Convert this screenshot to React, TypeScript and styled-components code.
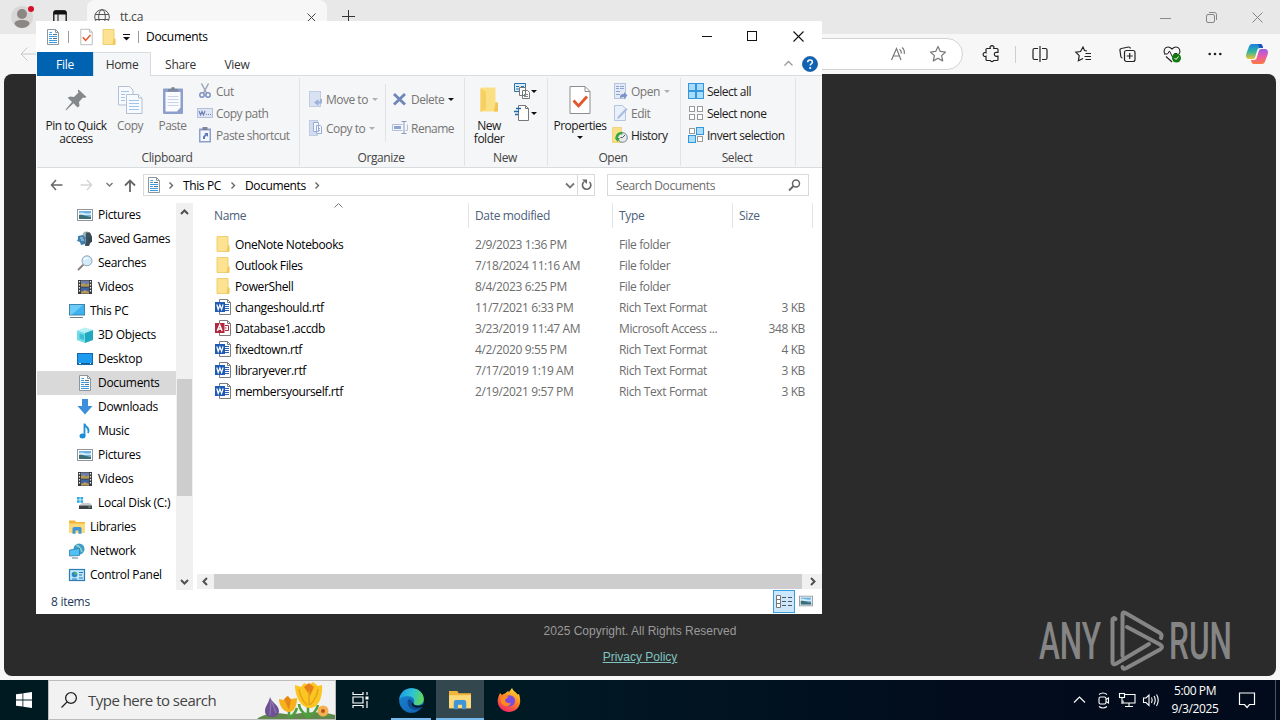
import React from 'react';
import styled, { createGlobalStyle } from 'styled-components';

const GlobalStyle = createGlobalStyle`
    * { box-sizing: border-box; }
    html, body { margin: 0; padding: 0; overflow: hidden; }
    body { font-family: "Open Sans", "Noto Sans", sans-serif; font-size: 12px; letter-spacing: -0.38px; color: #000; }
`;

const Desktop = styled.div`
    position: relative;
    display: flex;
    flex-direction: column;
    width: 1280px;
    height: 720px;
    overflow: hidden;
    background: #f7f7f7;
`;

const Svg = styled.svg<{ $ml?: number; $mr?: number }>`
    display: block;
    flex: none;
    overflow: visible;
    margin-left: ${p => p.$ml || 0}px;
    margin-right: ${p => p.$mr || 0}px;
`;

const Gap = styled.div<{ $w: number }>`
    flex: none;
    width: ${p => p.$w}px;
`;

/* ---------- browser ---------- */

const Browser = styled.div`
    display: flex;
    flex-direction: column;
    height: 680px;
    background: #f7f7f7;
`;

const TabStrip = styled.div`
    display: flex;
    align-items: flex-start;
    height: 34px;
    background: #e8e8e8;
    padding: 0 17px 0 11px;
`;

const BrowserTab = styled.div`
    display: flex;
    align-items: center;
    width: 240px;
    height: 34px;
    margin-left: 20px;
    padding: 0 11px 0 7px;
    background: #f7f7f7;
    border-radius: 8px 8px 0 0;
    color: #444;
    font-size: 12px;
    gap: 10px;
`;

const TabName = styled.span`
    flex: 1;
    padding-bottom: 1px;
    letter-spacing: -0.2px;
`;

const StripButtons = styled.div`
    display: flex;
    align-items: center;
    gap: 35px;
    height: 34px;
    margin-left: auto;
`;

const ToolBar = styled.div`
    display: flex;
    align-items: center;
    height: 40px;
    padding: 0 11px 0 20px;
`;

const UrlBox = styled.div`
    display: flex;
    flex: none;
    align-items: center;
    justify-content: flex-end;
    gap: 22px;
    width: 900px;
    height: 32px;
    margin-left: 27px;
    padding-right: 15px;
    background: #fff;
    border: 1px solid #d2d2d2;
    border-radius: 16px;
`;

const ToolIcons = styled.div`
    display: flex;
    align-items: center;
    flex: 1;
    padding-left: 20px;
`;

const ToolDivider = styled.div`
    flex: none;
    width: 1px;
    height: 17px;
    background: #cfcfcf;
    margin: 0 16px 0 15px;
`;

const ToolGroup = styled.div`
    display: flex;
    align-items: center;
    gap: 27px;

    & > :last-child { margin-left: -3px; }
`;

const WebPage = styled.div`
    display: flex;
    flex-direction: column;
    justify-content: flex-end;
    align-items: center;
    height: 602px;
    margin: 0 4px;
    padding-bottom: 11px;
    background: #2b2b2b;
    border-radius: 8px;
    color: #9a9a9a;
    font-family: "Liberation Sans", Arial, sans-serif;
    font-size: 12px;
    letter-spacing: 0;
    line-height: 16px;
    gap: 10px;
`;

const PolicyLink = styled.a`
    color: #7fc4c0;
    text-decoration: underline;
`;

const Watermark = styled.svg`
    position: absolute;
    left: 1036px;
    top: 606px;
    overflow: visible;
    letter-spacing: 0;
`;

/* ---------- explorer window ---------- */

const Window = styled.div`
    position: absolute;
    left: 36px;
    top: 21px;
    display: flex;
    flex-direction: column;
    width: 786px;
    height: 593px;
    padding-left: 1px;
    background: #fff;
`;

const TitleBar = styled.div`
    display: flex;
    align-items: center;
    height: 31px;
    padding: 0 18px 0 8px;
    letter-spacing: -0.28px;
`;

const TitleSep = styled.div<{ $l: number; $r: number }>`
    width: 1px;
    height: 12px;
    background: #9a9a9a;
    margin: 0 ${p => p.$r}px 0 ${p => p.$l}px;
`;

const WindowButtons = styled.div`
    display: flex;
    align-items: center;
    gap: 35px;
    margin-left: auto;
`;

const RibbonTabs = styled.div`
    display: flex;
    align-items: stretch;
    height: 24px;
    border-bottom: 1px solid #dadbdc;
    padding-right: 4px;
`;

const RibbonTab = styled.div<{ $w: number; $kind?: 'file' | 'active' }>`
    display: flex;
    align-items: center;
    justify-content: center;
    width: ${p => p.$w}px;
    height: 24px;
    letter-spacing: -0.3px;
    color: ${p => (p.$kind === 'file' ? '#fff' : '#333')};
    background: ${p => (p.$kind === 'file' ? '#0063b1' : p.$kind === 'active' ? '#f5f6f7' : 'transparent')};
    border: ${p => (p.$kind === 'active' ? '1px solid #dadbdc' : '0')};
    border-bottom: 0;
`;

const RibbonRight = styled.div`
    display: flex;
    align-items: center;
    gap: 9px;
    margin-left: auto;
`;

const Ribbon = styled.div`
    display: flex;
    height: 92px;
    background: #f5f6f7;
    border-bottom: 1px solid #dadbdc;
    letter-spacing: -0.5px;
`;

const Group = styled.div<{ $w: number }>`
    display: flex;
    flex-direction: column;
    width: ${p => p.$w}px;
    height: 88px;
    margin-top: 2px;
    border-right: 1px solid #e2e3e4;
`;

const GroupBody = styled.div<{ $pad?: number }>`
    display: flex;
    flex: none;
    height: 71px;
    padding-left: ${p => p.$pad || 0}px;
`;

const GroupName = styled.div`
    padding-right: 2px;
    text-align: center;
    line-height: 18px;
    color: #444;
    letter-spacing: -0.4px;
`;

const BigButton = styled.div<{ $w: number; $dim?: boolean }>`
    display: flex;
    flex-direction: column;
    align-items: center;
    width: ${p => p.$w}px;
    padding-top: 6px;
    line-height: 13px;
    text-align: center;
    white-space: nowrap;
    color: ${p => (p.$dim ? '#757575' : '#1c1c1c')};
`;

const BigIcon = styled.div`
    display: flex;
    align-items: center;
    justify-content: center;
    height: 32px;
    margin-bottom: 3px;
`;

const SmallColumn = styled.div<{ $tall?: boolean; $l?: number; $w?: number }>`
    display: flex;
    flex-direction: column;
    width: ${p => (p.$w ? `${p.$w}px` : 'auto')};
    padding-top: ${p => (p.$tall ? 10 : 2)}px;
    gap: ${p => (p.$tall ? 7 : 0)}px;
    margin-left: ${p => p.$l || 0}px;
`;

const SmallButton = styled.div<{ $dim?: boolean; $gap?: number }>`
    display: flex;
    align-items: center;
    gap: ${p => p.$gap || 3}px;
    height: 22px;
    white-space: nowrap;
    color: ${p => (p.$dim ? '#757575' : '#1c1c1c')};
`;

const InnerSep = styled.div`
    width: 1px;
    height: 58px;
    margin-top: 6px;
    background: #e2e3e4;
`;

const AddressRow = styled.div`
    display: flex;
    align-items: center;
    height: 35px;
    padding: 0 13px 1px 13px;
`;

const AddressBox = styled.div`
    display: flex;
    align-items: center;
    width: 452px;
    height: 22px;
    margin-left: 7px;
    border: 1px solid #d9d9d9;
`;

const Crumb = styled.span<{ $w: number }>`
    width: ${p => p.$w}px;
    margin-left: 9px;
    white-space: nowrap;
`;

const Refresh = styled.div`
    display: flex;
    align-items: center;
    justify-content: center;
    width: 17px;
    height: 20px;
    margin-left: 2px;
    border-left: 1px solid #d9d9d9;
`;

const SearchBox = styled.div`
    display: flex;
    align-items: center;
    justify-content: space-between;
    width: 202px;
    height: 22px;
    margin-left: 12px;
    padding: 0 7px 0 8px;
    border: 1px solid #d9d9d9;
    color: #6d6d6d;
    letter-spacing: -0.4px;
`;

const Panes = styled.div`
    display: flex;
    height: 387px;
`;

const NavPane = styled.div`
    width: 139px;
    height: 387px;
    overflow: hidden;
`;

const NavRow = styled.div<{ $level: number; $selected?: boolean }>`
    display: flex;
    align-items: center;
    gap: 5px;
    height: 24px;
    padding-left: ${p => 24 + p.$level * 8}px;
    white-space: nowrap;
    letter-spacing: -0.3px;
    background: ${p => (p.$selected ? '#d9d9d9' : 'transparent')};
`;

const NavLabel = styled.span`
    padding-bottom: 1px;
`;

const VScroll = styled.div`
    display: flex;
    flex-direction: column;
    align-items: center;
    justify-content: space-between;
    width: 17px;
    height: 387px;
    padding: 6px 0 5px;
    background: #f0f0f0;
`;

const VThumb = styled.div`
    width: 15px;
    height: 117px;
    margin-top: 80px;
    background: #cdcdcd;
`;

const FilePane = styled.div`
    display: flex;
    flex-direction: column;
    width: 625px;
    margin-left: 4px;
`;

const FileGrid = styled.div`
    display: grid;
    grid-template-columns: 272px 144px 120px 80px;
    align-items: center;
`;

const HeaderRow = styled(FileGrid)`
    height: 25px;
    margin-bottom: 6px;
    color: #4c607a;
    letter-spacing: -0.34px;
`;

const HeaderCell = styled.div<{ $first?: boolean }>`
    position: relative;
    display: flex;
    align-items: center;
    height: 25px;
    padding-left: ${p => (p.$first ? 17 : 6)}px;
    border-right: 1px solid #e5e5e5;
`;

const SortMark = styled.svg`
    position: absolute;
    left: 137px;
    top: 0;
`;

const FileRow = styled(FileGrid)`
    height: 21px;
    color: #6d6d6d;
`;

const FileName = styled.div`
    display: flex;
    align-items: center;
    gap: 4px;
    padding: 0 0 1px 18px;
    color: #000;
`;

const FileCell = styled.div<{ $right?: boolean }>`
    padding: ${p => (p.$right ? '0 8px 1px 0' : '0 0 1px 6px')};
    text-align: ${p => (p.$right ? 'right' : 'left')};
    white-space: nowrap;
`;

const HScroll = styled.div`
    display: flex;
    align-items: center;
    justify-content: space-between;
    height: 15px;
    margin-top: auto;
    margin-bottom: 1px;
    padding: 0 6px 0 5px;
    background: #f0f0f0;
`;

const HThumb = styled.div`
    width: 588px;
    height: 15px;
    margin-right: 3px;
    background: #cdcdcd;
`;

const StatusBar = styled.div`
    display: flex;
    align-items: center;
    height: 24px;
    padding: 0 9px 2px 14px;
    color: #1e395b;
    letter-spacing: -0.28px;
`;

const ViewToggle = styled.div`
    display: flex;
    align-items: center;
    justify-content: center;
    width: 22px;
    height: 23px;
    margin: 0 4px 0 auto;
    background: #cce8ff;
    border: 1px solid #3e9bdc;
`;

/* ---------- taskbar ---------- */

const Taskbar = styled.div`
    display: flex;
    height: 40px;
    background: linear-gradient(90deg, #001a22 0%, #001a24 40%, #020c1c 75%, #020b1b 100%);
    color: #fff;
`;

const StartButton = styled.div`
    display: flex;
    align-items: center;
    justify-content: center;
    width: 48px;
`;

const TaskSearch = styled.div`
    display: flex;
    align-items: center;
    width: 288px;
    height: 40px;
    padding-left: 12px;
    background: #f2f2f2;
    border: 1px solid #bcbcbc;
    color: #444;
    font-size: 15px;
    letter-spacing: -0.52px;
`;

const SearchHint = styled.span`
    flex: 1;
    margin-left: 11px;
`;

const TaskButton = styled.div<{ $open?: boolean; $active?: boolean; $w?: number }>`
    display: flex;
    align-items: center;
    justify-content: center;
    width: ${p => p.$w || 48}px;
    height: 40px;
    background: ${p => (p.$active ? '#33474f' : 'transparent')};
    box-shadow: ${p => (p.$open ? 'inset 0 -2px 0 #76b9ed' : 'none')};
`;

const Tray = styled.div`
    display: flex;
    align-items: center;
    margin-left: auto;
    height: 40px;
`;

const Clock = styled.div`
    width: 64px;
    margin-right: 11px;
    text-align: center;
    line-height: 18px;
    padding-bottom: 1px;
    letter-spacing: -0.4px;
`;

const ShowDesktop = styled.div`
    width: 5px;
    height: 40px;
    border-left: 1px solid #4d5560;
`;

/* ---------- icons ---------- */

const FolderIcon = ({ w = 16, h = 16 }: { w?: number; h?: number }) => (
    <Svg width={w} height={h} viewBox="0 0 16 16">
        <path d="M2 .5h11v9.500h1v5.500H2z" fill="#fde391" stroke="#e9c65c" strokeWidth=".8" />
        <path d="M12.500 9.500h1.800v6h-2.800z" fill="#f0c95a" />
    </Svg>
);

const DocIcon = ({ s = 16 }: { s?: number }) => (
    <Svg width={s} height={s} viewBox="0 0 16 16">
        <path d="M2.500.5h8l3 3v12h-11z" fill="#fff" stroke="#8b969e" />
        <path d="M10.500.5v3h3" fill="none" stroke="#8b969e" />
        <path d="M4.500 3.500h2.500M4 5.500h3M4 7.500h8M4 9.500h3M4 11.500h8M4 13.500h8" stroke="#3a9be0" />
        <path d="M8 5.500h4M8 9.500h4" stroke="#5b6d7a" />
    </Svg>
);

const WordIcon = () => (
    <Svg width="16" height="16" viewBox="0 0 16 16">
        <path d="M4.500.5h8l3 3v12h-11z" fill="#fff" stroke="#7d7d7d" />
        <path d="M12.500.5v3h3" fill="none" stroke="#7d7d7d" />
        <path d="M10 5.500h4M10 7.500h4M10 9.500h4M10 11.500h4" stroke="#2b5fb8" />
        <rect x="0" y="3" width="10" height="10" fill="#1f5bb5" />
        <path d="M1.800 5.500l1.400 5 1.700-4.500 1.700 4.500 1.500-5" fill="none" stroke="#fff" strokeWidth="1.200" />
    </Svg>
);

const AccessIcon = () => (
    <Svg width="16" height="16" viewBox="0 0 16 16">
        <path d="M4.500.5h8l3 3v12h-11z" fill="#fff" stroke="#7d7d7d" />
        <path d="M12.500.5v3h3" fill="none" stroke="#7d7d7d" />
        <path d="M10 5.500h3.500v5H10M10 8h1.500" fill="none" stroke="#b3283f" />
        <rect x="0" y="3" width="9.500" height="10" fill="#b3283f" />
        <path d="M2.300 11l2.400-6 2.400 6M3.200 9h3" fill="none" stroke="#fff" strokeWidth="1.400" />
    </Svg>
);

const PictureIcon = ({ w = 16 }: { w?: number }) => (
    <Svg width={w} height="16" viewBox="0 0 16 16">
        <rect x=".5" y="2.500" width="15" height="11" fill="#fff" stroke="#8f979d" />
        <rect x="2" y="4" width="12" height="8" fill="#6fb3e4" />
        <path d="M2 6c4-2 6 2 12 0v2H2z" fill="#d4ebf8" />
        <path d="M2 8c3-1 5 1 12 2v2H2z" fill="#3c6e74" />
    </Svg>
);

const GamesIcon = () => (
    <Svg width="16" height="16" viewBox="0 0 16 16">
        <circle cx="9.500" cy="4.500" r="4" fill="#9fb3bf" />
        <path d="M9 1.500h4l2 4-1 5-2 4.500H8z" fill="#3d4f5b" />
        <path d="M1 5l5-1 2 2v7l-4 1-1-3-3-1 1-2z" fill="#3e7fae" />
        <path d="M11 7l4-1v5l-3 1z" fill="#2f4a5b" />
        <path d="M3 7h3M4 9h3" stroke="#bfe0f5" />
    </Svg>
);

const SearchesIcon = () => (
    <Svg width="16" height="16" viewBox="0 0 16 16">
        <path d="M1.500 14.500L6 10" stroke="#8a7d75" strokeWidth="1.800" strokeLinecap="round" />
        <circle cx="10" cy="5.800" r="5" fill="#d3eafa" stroke="#8ba7bb" />
        <path d="M7 5c1-2 3-2 4-1.500" stroke="#fff" fill="none" strokeWidth="1.200" />
    </Svg>
);

const VideoIcon = () => (
    <Svg width="16" height="16" viewBox="0 0 16 16">
        <rect x="1" y="1" width="14" height="14" fill="#3a3a3a" />
        <rect x="4" y="1.500" width="8" height="6" fill="#6d7fa8" />
        <rect x="4" y="8.500" width="8" height="6" fill="#3e62a6" />
        <path d="M4 5l3-1 2 2 3-2v3.500H4zM4 13l4-2 4 2v1.500H4z" fill="#b59b52" />
        <path d="M2.500 2v12M13.500 2v12" stroke="#eee" strokeDasharray="1.500 1.500" strokeWidth="1.200" />
    </Svg>
);

const PcIcon = () => (
    <Svg width="16" height="16" viewBox="0 0 16 16">
        <rect x=".5" y="1.500" width="15" height="10.500" fill="#3db2ef" stroke="#3f86ad" />
        <path d="M1 2h13L3 11.500H1z" fill="#6ccbf7" />
        <path d="M1 14.500h13" stroke="#6f7e88" />
    </Svg>
);

const CubeIcon = () => (
    <Svg width="16" height="16" viewBox="0 0 16 16">
        <path d="M0 3.500L8 .5l8 2.500-8 3z" fill="#b8f0f5" />
        <path d="M0 3.500l8 2.500v10L0 13z" fill="#6fdbe6" />
        <path d="M8 6l8-3v10l-8 3z" fill="#1fa9c0" />
        <path d="M2.500 6.500L7 8v5l-4.500-1.500z" fill="#3bbfd2" />
    </Svg>
);

const DesktopIcon = () => (
    <Svg width="16" height="16" viewBox="0 0 16 16">
        <rect x=".5" y="2.500" width="15" height="11" fill="#1c9cf0" stroke="#1668a8" />
        <path d="M1 12.500h14" stroke="#0f5c9c" />
        <path d="M2 12.500h2M13 12.500h1" stroke="#d8efff" />
    </Svg>
);

const DownIcon = () => (
    <Svg width="16" height="16" viewBox="0 0 16 16">
        <path d="M5 0h6v7h4.500L8 15.500.5 7H5z" fill="#3c8fdb" />
    </Svg>
);

const MusicIcon = () => (
    <Svg width="16" height="16" viewBox="0 0 16 16">
        <path d="M7.500 13V.5c.5 4 6 4 3.500 9.500" fill="none" stroke="#1a8fd8" strokeWidth="1.800" />
        <ellipse cx="5.500" cy="13" rx="3" ry="2.500" fill="#1a8fd8" />
    </Svg>
);

const DiskIcon = () => (
    <Svg width="16" height="16" viewBox="0 0 16 16">
        <path d="M0 2h2.700v2.500H0zM3.400 2h2.700v2.500H3.400zM0 5.200h2.700v2.500H0zM3.400 5.200h2.700v2.500H3.400z" fill="#2aa8e0" />
        <path d="M2 10.500l3-2.500h8l2 2.500z" fill="#c5cacd" />
        <rect x="2" y="10.500" width="13" height="3.500" fill="#3b4144" />
        <rect x="11.500" y="11.500" width="2" height="1" fill="#6fe06f" />
    </Svg>
);

const LibraryIcon = ({ w = 16, h = 16 }: { w?: number; h?: number }) => (
    <Svg width={w} height={h} viewBox="0 0 16 16">
        <path d="M0 1.500h6l1 1.500h9v11H0z" fill="#f3b63a" />
        <path d="M0 4.500h16V14H0z" fill="#fcd979" />
        <path d="M3.500 14.800V9.500q0-1.500 1.500-1.500h6q1.500 0 1.500 1.500v5.300h-3v-3.300h-3v3.300z" fill="#3f95d8" />
    </Svg>
);

const NetworkIcon = () => (
    <Svg width="16" height="16" viewBox="0 0 16 16">
        <circle cx="10" cy="6" r="5.500" fill="#3f9cc9" />
        <path d="M7 2c3 1 5 3 6 7" stroke="#8ed4c8" strokeWidth="1.500" fill="none" />
        <path d="M.5 7l10-1.500v7L.5 13z" fill="#4fc0f5" stroke="#2f7ea8" strokeWidth=".8" />
        <path d="M3 15h6" stroke="#5b7f92" />
    </Svg>
);

const PanelIcon = () => (
    <Svg width="16" height="16" viewBox="0 0 16 16">
        <rect x=".5" y="2.500" width="15" height="11" fill="#bfe7fb" stroke="#2b7bb5" strokeWidth="1.200" />
        <circle cx="5.500" cy="7.500" r="2.800" fill="#2787c9" />
        <path d="M5.500 7.500V4.700a2.800 2.800 0 0 1 2.800 2.800z" fill="#58b868" />
        <path d="M10 5.500h4M10 8h3M3 12h5M10 11h4" stroke="#2b7bb5" />
    </Svg>
);

const Tri = ({ c = '#111', ml }: { c?: string; ml?: number }) => (
    <Svg $ml={ml} width="6" height="3" viewBox="0 0 6 3"><path d="M0 0h6L3 3z" fill={c} /></Svg>
);

const Chevron = ({ d, w = 9, h = 9, c = '#505050', t = 2, ml }: { d: string; w?: number; h?: number; c?: string; t?: number; ml?: number }) => (
    <Svg $ml={ml} width={w} height={h} viewBox={`0 0 ${w} ${h}`}><path d={d} fill="none" stroke={c} strokeWidth={t} /></Svg>
);

const PinIcon = () => (
    <Svg width="24" height="24" viewBox="0 0 24 24">
        <path d="M14.500 1.500l8 7.500-2 1-1.500-.5-4 4.500.5 4-2 1.500-4-4.200L2.500 22l-1 .3.500-1.300 6-7-4.300-4.300L6 8.500l4 .5 4.500-4.500-.8-1.700z" fill="#85888a" />
    </Svg>
);

const CopyIcon = () => (
    <Svg width="26" height="30" viewBox="0 0 26 30">
        <g fill="#f7faff" stroke="#b3bfd3">
            <path d="M1.500 1.500h11l3.500 3.500v15h-14.500z" />
            <path d="M9.500 9.500h12l3.500 3.500v15.500h-15.500z" />
            <path d="M21.500 9.500v3.500h3.500" />
        </g>
        <path d="M4 6.500h8M4 9.500h4M4 12.500h4M4 15.500h4M12 15.500h10M12 18.500h10M12 21.500h10M12 24.500h10" stroke="#a3c3ea" />
    </Svg>
);

const PasteIcon = () => (
    <Svg width="22" height="30" viewBox="0 0 22 30">
        <rect x="1" y="3.500" width="20" height="25.500" rx="1" fill="#8d9fca" />
        <path d="M3.500 7h15v15.500l-3.500 4H3.500z" fill="#fafbff" />
        <path d="M5.500 11.500h11M5.500 14.500h11M5.500 17.500h11M5.500 20.500h11" stroke="#c9d4ea" />
        <path d="M6 6.500V4h3a2 2 0 0 1 4 0h3v2.500z" fill="#7d8798" />
    </Svg>
);

const CutIcon = () => (
    <Svg width="16" height="16" viewBox="0 0 16 16">
        <path d="M4.500.5l5 9.500M11.500.5L6.500 10" stroke="#9aa5b5" strokeWidth="1.500" />
        <circle cx="5" cy="12" r="2.200" fill="none" stroke="#7d90c0" strokeWidth="1.500" />
        <circle cx="11" cy="12" r="2.200" fill="none" stroke="#7d90c0" strokeWidth="1.500" />
    </Svg>
);

const PathIcon = () => (
    <Svg width="16" height="16" viewBox="0 0 16 16">
        <rect x=".5" y="3.500" width="15" height="9" fill="#dde5f4" stroke="#b4c0dc" />
        <path d="M2 6l1.500 4L5 6.500 6.500 10 8 6" fill="none" stroke="#6f83b8" strokeWidth="1.200" />
        <path d="M9 9.500h5" stroke="#6f83b8" strokeDasharray="1 1" />
    </Svg>
);

const ShortcutIcon = () => (
    <Svg width="16" height="16" viewBox="0 0 16 16">
        <rect x="2" y="1.500" width="12" height="14" fill="#8d9fca" />
        <rect x="3.500" y="3.500" width="9" height="10.500" fill="#f4f7ff" />
        <rect x="5.500" y="0" width="5" height="3" fill="#7d8798" />
        <path d="M6 12V9.500L8.500 7 7 6h4v4L9.800 8.500 8 10v2z" fill="#5f78b8" />
    </Svg>
);

const MoveIcon = () => (
    <Svg width="16" height="16" viewBox="0 0 16 16">
        <rect x="1.500" y=".5" width="11" height="15" fill="#d9e2f2" stroke="#c1cce2" />
        <path d="M14 8v4.500h-3.500v2.500L6 11.500 10.500 8v2.500H12V8z" fill="#9fb0d5" />
    </Svg>
);

const CopyToIcon = () => (
    <Svg width="16" height="16" viewBox="0 0 16 16">
        <rect x="1.500" y=".5" width="8" height="15" fill="#d3dcef" stroke="#c1cce2" />
        <path d="M5.500 2.500h5v9h-5zM8.500 5.500h4l1 1v7h-5z" fill="#f5f8ff" stroke="#98acd6" />
        <path d="M10 8.500h2M10 10.500h2" stroke="#98acd6" />
    </Svg>
);

const DeleteIcon = () => (
    <Svg width="16" height="16" viewBox="0 0 16 16">
        <path d="M2 3l11 10.500M13 3L2 13.500" stroke="#6e86b9" strokeWidth="2.800" />
    </Svg>
);

const RenameIcon = () => (
    <Svg width="16" height="16" viewBox="0 0 16 16">
        <path d="M.5 4.500h10M.5 4.500v6h10M15.500 4.500v6h-2" fill="none" stroke="#b2bedc" />
        <rect x="2" y="6" width="7" height="3" fill="#8ea4d4" />
        <path d="M9.500 1.500h5M12 1.500v12M9.500 13.500h5" stroke="#8b9abf" />
    </Svg>
);

const BigFolderIcon = () => (
    <Svg width="19" height="28" viewBox="0 0 19 28">
        <path d="M.5 2.500l1-1h14v15h2.500v9H.5z" fill="#fbdf83" />
        <path d="M.5 2.500L6 6v17L.5 26z" fill="#f7d062" />
        <path d="M15.500 16.500H18v9h-4z" fill="#f2c455" />
    </Svg>
);

const NewItemIcon = () => (
    <Svg width="16" height="16" viewBox="0 0 16 16">
        <path d="M.5.5h11v8H.5z" fill="#dcedf9" stroke="#2873ad" />
        <path d="M2 3.500h3M7 3.500h3M2 6h3" stroke="#2873ad" />
        <path d="M5.500 4.500h6v8h-6zM8.500 7.500h5l2 2v6h-7z" fill="#fff" stroke="#777" />
        <path d="M10 11.500h4M10 13.500h4" stroke="#888" />
    </Svg>
);

const EasyIcon = () => (
    <Svg width="16" height="16" viewBox="0 0 16 16">
        <path d="M4.500.5h7l3 3v12h-10z" fill="#fff" stroke="#777" />
        <path d="M11.500.5v3h3" fill="none" stroke="#777" />
        <path d="M2 3.500h5M0 6.500h5M1 9.500h3" stroke="#1a6ab0" strokeWidth="1.500" />
    </Svg>
);

const CheckPage = ({ w, h }: { w: number; h: number }) => (
    <Svg width={w} height={h} viewBox="0 0 22 28">
        <path d="M1 .5h15l5 5v22H1z" fill="#fff" stroke="#8e8e8e" />
        <path d="M16 .5v5h5" fill="none" stroke="#8e8e8e" />
        <path d="M4.500 14.500l5 5.500 8.500-9.500" fill="none" stroke="#e2582c" strokeWidth="2.800" />
    </Svg>
);

const OpenIcon = () => (
    <Svg width="16" height="16" viewBox="0 0 16 16">
        <rect x="2.500" y=".5" width="11" height="15" fill="#e3eaf7" stroke="#b7c4e0" />
        <path d="M4 3.500h3M8 3.500h4M4 5.500h3M8 5.500h4M4 8.500h4M4 11.500h4" stroke="#8da3d2" />
        <path d="M8 15c0-4 2-4 4-4V9l3.500 3.500L12 16v-2z" fill="#7e93c6" />
    </Svg>
);

const EditIcon = () => (
    <Svg width="16" height="16" viewBox="0 0 16 16">
        <path d="M2.500.5h8l3 3v12h-11z" fill="#eaf0fa" stroke="#b7c4e0" />
        <path d="M5 14.500l1-3 8-8.500 1.500 1.500-8 8.500z" fill="#a9bbe0" />
    </Svg>
);

const HistoryIcon = () => (
    <Svg width="16" height="16" viewBox="0 0 16 16">
        <path d="M.5.5h9v15h-9z" fill="#fbe08a" stroke="#ebc557" strokeWidth=".6" />
        <circle cx="10.500" cy="10.500" r="4.800" fill="#e6eaec" stroke="#77828a" />
        <path d="M10.500 10.500l2.500-2.500M10.500 10.500h-2" stroke="#555" />
        <path d="M4.500 12c0-4 2.500-6 6-6" fill="none" stroke="#35a843" strokeWidth="2.500" />
        <path d="M3 11h5l-2.500 4z" fill="#35a843" />
    </Svg>
);

const SelectIcon = ({ on }: { on: boolean[] }) => (
    <Svg width="16" height="16" viewBox="0 0 16 16">
        {on.map((o, i) => (
            <rect
                key={i}
                x={(i % 2) * 8 + (o ? 0.5 : 1.5)}
                y={Math.floor(i / 2) * 8 + (o ? 0.5 : 1.5)}
                width={o ? 7 : 5}
                height={o ? 7 : 5}
                fill={o ? '#a9dcfb' : '#fff'}
                stroke={o ? '#3397dd' : '#9a9a9a'}
            />
        ))}
    </Svg>
);

const EdgeIcon = () => (
    <Svg width="25" height="25" viewBox="0 0 25 25">
        <defs>
            <linearGradient id="edgeTop" x1="0" y1="0.3" x2="1" y2="0.5">
                <stop offset="0" stopColor="#1f9ae0" />
                <stop offset=".5" stopColor="#2cc3d6" />
                <stop offset="1" stopColor="#62d957" />
            </linearGradient>
            <linearGradient id="edgeLow" x1="0" y1="0" x2=".6" y2="1">
                <stop offset="0" stopColor="#1b86d6" />
                <stop offset="1" stopColor="#1268b8" />
            </linearGradient>
        </defs>
        <circle cx="12.500" cy="12.500" r="12.300" fill="url(#edgeLow)" />
        <path d="M.3 11.500C1 4.500 6 .2 12.500.2 19.500.2 24.800 5 24.800 11c0 4-3 6.200-6.300 6.200-3 0-4.500-1.200-4-2 1.500-2 1-5.700-3-6.700C7 7.500 2 8.500.3 11.500z" fill="url(#edgeTop)" />
        <path d="M9 12c-1.500 4 1 10 8 10 2 0 4-.5 5.500-1.700C24 18.500 23.500 18 22 18.600c-6 2-10-1-9-5 .3-1.500-3-3.500-4-1.600z" fill="#0e4c94" />
        <path d="M14.300 15c0 2.500 4.500 3.800 9 1.800l1.700-.8-.5 2.500c-5 2-11 1.500-11.800-2.500-.2-1 .5-2 1.600-1z" fill="#001a24" />
    </Svg>
);

const FirefoxIcon = () => (
    <Svg width="24" height="24" viewBox="0 0 24 24">
        <defs>
            <linearGradient id="fox" x1=".8" y1="0" x2=".3" y2="1">
                <stop offset="0" stopColor="#ffe13a" />
                <stop offset=".45" stopColor="#ff8a1f" />
                <stop offset="1" stopColor="#f4226b" />
            </linearGradient>
        </defs>
        <path d="M3 5l2 2c1-1 2-1.500 3-1.500L11 3l1 1 3-4c1 3 4 4 5.500 6.500L22 6c1 3 1.500 6 1 9-1 5.500-5.500 9-11 9S1.500 20 .8 14.500C.4 11 1.500 8 3 5z" fill="url(#fox)" />
        <circle cx="12.500" cy="12.800" r="5.600" fill="#7b4be0" />
        <path d="M4 10c2-2 5-2 7.500-1.500-.5 2-2.500 1.500-3.500 3 0 3 3 4.500 6 3.500-1.500 3-5 4-8 2-2-1.500-3-4.500-2-7z" fill="#ff8b1e" />
    </Svg>
);

const FlowerArt = () => (
    <Svg width="79" height="38" viewBox="0 0 79 38">
        <path d="M1 38c8-6 20-7 34-4 12-3 30-4 44 0v4z" fill="#5f8a4b" />
        <path d="M33 37V26M52 37V22M52 36c-5-4-9-9-9-13M53 36c4-3 8-8 9-12M34 36c4-2 6-6 7-9" stroke="#4f9f3c" strokeWidth="2.600" fill="none" />
        <path d="M14 16c1 5 9 8 9 14 0 4-3 6-7 6s-7-2-7-6c0-5 4-8 5-14z" fill="#6d5291" />
        <path d="M15 19l-1 15M16 21l4 11" stroke="#8e74b5" strokeWidth="1.300" fill="none" />
        <path d="M23 18l5 1 3-4 4 3 6-1c0 8-3 14-8 14s-10-6-10-13z" fill="#f6b21b" />
        <path d="M28 18l4-3 3 4-2 10z" fill="#e8861a" />
        <path d="M39 4l6 2 3-4 5 2 4-3 5 4 4-1c1 13-4 23-12 23S39 17 39 4z" fill="#fbc522" />
        <path d="M48 6l5-4 5 4-4 9z" fill="#e8801a" />
        <path d="M43 8c1 8 4 12 8 16M62 8c-1 8-4 12-8 16M53 10v14" stroke="#e8a21a" strokeWidth="1.500" fill="none" />
        <circle cx="67" cy="30" r="5.500" fill="#f5b052" />
        <circle cx="67" cy="30" r="2" fill="#b5541a" />
    </Svg>
);

const CopilotIcon = () => (
    <Svg width="22" height="20" viewBox="0 0 22 20">
        <defs>
            <linearGradient id="cpA" x1="0" y1="0" x2="0" y2="1">
                <stop offset="0" stopColor="#1b7fe0" />
                <stop offset=".5" stopColor="#2fb59f" />
                <stop offset="1" stopColor="#f0c22e" />
            </linearGradient>
            <linearGradient id="cpB" x1="0" y1="0" x2="0" y2="1">
                <stop offset="0" stopColor="#9b5bea" />
                <stop offset=".5" stopColor="#ec5aa5" />
                <stop offset="1" stopColor="#fb7b3f" />
            </linearGradient>
        </defs>
        <path d="M6 0h8c2 0 2.500 1.500 3 4h-3c-2 0-2.500 1-3 3l-1.500 5c-.6 2-1 3-3 3H3c-3 0-3.500-3-2.500-6L3 2.500C3.500 1 4.500 0 6 0z" fill="url(#cpA)" />
        <path d="M16 20H8c-2 0-2.500-1.500-3-4h3c2 0 2.500-1 3-3l1.500-5c.6-2 1-3 3-3H19c3 0 3.500 3 2.500 6L19 17.500c-.5 1.500-1.500 2.500-3 2.500z" fill="url(#cpB)" />
        <path d="M12 0h2c2 0 2.500 1.500 3 4h-3.500z" fill="#1c4fc4" />
    </Svg>
);

/* ---------- data ---------- */

const navItems = [
    { name: 'Pictures', icon: <PictureIcon />, level: 2 },
    { name: 'Saved Games', icon: <GamesIcon />, level: 2 },
    { name: 'Searches', icon: <SearchesIcon />, level: 2 },
    { name: 'Videos', icon: <VideoIcon />, level: 2 },
    { name: 'This PC', icon: <PcIcon />, level: 1 },
    { name: '3D Objects', icon: <CubeIcon />, level: 2 },
    { name: 'Desktop', icon: <DesktopIcon />, level: 2 },
    { name: 'Documents', icon: <DocIcon />, level: 2, selected: true },
    { name: 'Downloads', icon: <DownIcon />, level: 2 },
    { name: 'Music', icon: <MusicIcon />, level: 2 },
    { name: 'Pictures', icon: <PictureIcon />, level: 2 },
    { name: 'Videos', icon: <VideoIcon />, level: 2 },
    { name: 'Local Disk (C:)', icon: <DiskIcon />, level: 2 },
    { name: 'Libraries', icon: <LibraryIcon />, level: 1 },
    { name: 'Network', icon: <NetworkIcon />, level: 1 },
    { name: 'Control Panel', icon: <PanelIcon />, level: 1 },
];

const files = [
    { name: 'OneNote Notebooks', date: '2/9/2023 1:36 PM', type: 'File folder', size: '', icon: <FolderIcon /> },
    { name: 'Outlook Files', date: '7/18/2024 11:16 AM', type: 'File folder', size: '', icon: <FolderIcon /> },
    { name: 'PowerShell', date: '8/4/2023 6:25 PM', type: 'File folder', size: '', icon: <FolderIcon /> },
    { name: 'changeshould.rtf', date: '11/7/2021 6:33 PM', type: 'Rich Text Format', size: '3 KB', icon: <WordIcon /> },
    { name: 'Database1.accdb', date: '3/23/2019 11:47 AM', type: 'Microsoft Access ...', size: '348 KB', icon: <AccessIcon /> },
    { name: 'fixedtown.rtf', date: '4/2/2020 9:55 PM', type: 'Rich Text Format', size: '4 KB', icon: <WordIcon /> },
    { name: 'libraryever.rtf', date: '7/17/2019 1:19 AM', type: 'Rich Text Format', size: '3 KB', icon: <WordIcon /> },
    { name: 'membersyourself.rtf', date: '2/19/2021 9:57 PM', type: 'Rich Text Format', size: '3 KB', icon: <WordIcon /> },
];

/* ---------- parts ---------- */

const BrowserView = () => (
    <Browser>
        <TabStrip>
            <Svg width="24" height="34" viewBox="0 0 24 34">
                <circle cx="11" cy="17" r="11" fill="#d9d7d5" />
                <circle cx="11" cy="14" r="5" fill="#8a8784" />
                <path d="M3.500 24c0-3 3-4 7.500-4s7.500 1 7.500 4c-1.500 2.500-4.500 4-7.500 4s-6-1.500-7.500-4z" fill="#8a8784" />
                <circle cx="20" cy="9" r="3" fill="#d4102a" />
            </Svg>
            <Svg $ml={18} width="14" height="34" viewBox="0 0 14 34">
                <rect x=".8" y="10.800" width="12.400" height="12.400" rx="2" fill="none" stroke="#111" strokeWidth="1.300" />
                <path d="M.8 13V12q0-1.500 1.500-1.500h9.400q1.500 0 1.500 1.500v2.500H.8z" fill="#111" />
                <path d="M5 14v9" stroke="#111" />
            </Svg>
            <BrowserTab>
                <Svg width="16" height="16" viewBox="0 0 16 16" fill="none" stroke="#555">
                    <circle cx="8" cy="8" r="7.300" />
                    <ellipse cx="8" cy="8" rx="3.300" ry="7.300" />
                    <path d="M1.300 5.500h13.400M1.300 10.500h13.400" />
                </Svg>
                <TabName>tt.ca</TabName>
                <Svg width="9" height="9" viewBox="0 0 9 9"><path d="M.5.5l8 8M8.500.5l-8 8" stroke="#444" /></Svg>
            </BrowserTab>
            <Svg $ml={14} width="14" height="34" viewBox="0 0 14 34">
                <path d="M7.500 10v13M1 16.500h13" stroke="#333" />
            </Svg>
            <StripButtons>
                <Svg width="11" height="11" viewBox="0 0 11 11"><path d="M0 6.500h11" stroke="#8a8a8a" /></Svg>
                <Svg width="11" height="11" viewBox="0 0 11 11" fill="none" stroke="#858585">
                    <rect x=".5" y="2.500" width="8" height="8" rx="1.500" />
                    <path d="M3 .5h5.500q2 0 2 2V8" />
                </Svg>
                <Svg width="11" height="11" viewBox="0 0 11 11"><path d="M.5.5l10 10M10.500.5l-10 10" stroke="#858585" /></Svg>
            </StripButtons>
        </TabStrip>
        <ToolBar>
            <Svg width="16" height="14" viewBox="0 0 16 14"><path d="M7.500.5L1 7l6.500 6.500M1 7h15" fill="none" stroke="#c8c8c8" /></Svg>
            <UrlBox>
                <Svg width="17" height="16" viewBox="0 0 17 16" fill="none" stroke="#777" strokeWidth="1.200">
                    <path d="M1.500 14L6.500 2.500 11 14M3.200 10h6.300" />
                    <path d="M9.500 3.200q2 1.500 1.800 4.300M12 1.500q3 2.500 2.200 6.500" />
                </Svg>
                <Svg width="18" height="18" viewBox="0 0 18 18">
                    <path d="M9 1.500l2.300 4.900 5.200.6-3.900 3.600 1.100 5.300L9 13.300l-4.700 2.600 1.100-5.300L1.500 7l5.200-.6z" fill="none" stroke="#777" strokeWidth="1.200" strokeLinejoin="round" />
                </Svg>
            </UrlBox>
            <ToolIcons>
                <Svg width="17" height="18" viewBox="0 0 17 18">
                    <path d="M4 3.500h3.200a2 2 0 1 1 3.600 0H14a1 1 0 0 1 1 1v3h-.8a2 2 0 1 0 0 3.600h.8v3.400a1 1 0 0 1-1 1h-3.200a2 2 0 0 1-3.600 0H4a1 1 0 0 1-1-1v-3.200a2 2 0 1 1 0-3.600V4.500a1 1 0 0 1 1-1z" fill="none" stroke="#222" strokeWidth="1.200" />
                </Svg>
                <ToolDivider />
                <ToolGroup>
                    <Svg width="16" height="16" viewBox="0 0 16 16" fill="none" stroke="#222" strokeWidth="1.200">
                        <path d="M6 2.500H2.500q-1.500 0-1.500 1.500v8q0 1.500 1.500 1.500H6M10 2.500h3.500q1.500 0 1.500 1.500v8q0 1.500-1.500 1.500H10M8 0v16" />
                    </Svg>
                    <Svg width="17" height="16" viewBox="0 0 17 16" fill="none" stroke="#222" strokeWidth="1.200">
                        <path d="M12 5L9.500 4.500 8 1 5.500 5.500.8 6.200l3.400 3.500-.8 5L8 12.500M10.500 7.500H16M9.500 10.500H16M10.500 13.500H16" />
                    </Svg>
                    <Svg width="17" height="16" viewBox="0 0 17 16" fill="none" stroke="#222" strokeWidth="1.200">
                        <path d="M3.500 12q-1.500 0-1.700-1.700L1 4.500Q.7 2.800 2.500 2.500L9.500 1q1.500-.2 2 1.500" />
                        <rect x="5.500" y="4.500" width="10.500" height="11" rx="2" />
                        <path d="M10.700 7v6M7.700 10h6" />
                    </Svg>
                    <Svg width="18" height="17" viewBox="0 0 18 17">
                        <path d="M2 8C0 5 1.500 1 5 1c2 0 3 1 4 2 1-1 2-2 4-2 3.500 0 5 4 3 7M3 10.500L9 16" fill="none" stroke="#222" strokeWidth="1.100" />
                        <path d="M1 8h3.500L6.500 5l3 6 2-3.500H14" fill="none" stroke="#222" />
                        <circle cx="13.500" cy="12" r="4.500" fill="#107c10" />
                        <path d="M11.500 12l1.500 1.500 2.500-3" fill="none" stroke="#fff" />
                    </Svg>
                    <Svg width="14" height="4" viewBox="0 0 14 4" fill="#222">
                        <circle cx="1.700" cy="2" r="1.300" /><circle cx="7" cy="2" r="1.300" /><circle cx="12.300" cy="2" r="1.300" />
                    </Svg>
                    <CopilotIcon />
                </ToolGroup>
            </ToolIcons>
        </ToolBar>
        <WebPage>
            <span>2025 Copyright. All Rights Reserved</span>
            <PolicyLink>Privacy Policy</PolicyLink>
        </WebPage>
    </Browser>
);

const AnyRunMark = () => (
    <Watermark width="200" height="70" viewBox="0 0 200 70">
        <g fill="#858585" fontFamily="Roboto, sans-serif" fontWeight="500" fontSize="51.500">
            <text x="3" y="53" textLength="62" lengthAdjust="spacingAndGlyphs">ANY</text>
            <text x="133" y="53" textLength="63" lengthAdjust="spacingAndGlyphs">RUN</text>
        </g>
        <g fill="none" stroke="#858585" strokeWidth="4" strokeLinejoin="round" strokeLinecap="round">
            <path d="M79.500 13q-2.500-2-3 .5v43q.5 3 4 1L113 38" />
            <path d="M86.500 50V8.500q0-3 3-1.500L124 27q2.500 2 1 5" />
            <path d="M91 21l33 17.500q4 2.500 0 5L90.500 62q-4 2-4-1" />
        </g>
    </Watermark>
);

const ExplorerRibbon = () => (
    <Ribbon>
        <Group $w={263}>
            <GroupBody $pad={6}>
                <BigButton $w={66}><BigIcon><PinIcon /></BigIcon>Pin to Quick<br />access</BigButton>
                <BigButton $w={42} $dim><BigIcon><CopyIcon /></BigIcon>Copy</BigButton>
                <BigButton $w={43} $dim><BigIcon><PasteIcon /></BigIcon>Paste</BigButton>
                <SmallColumn $l={3}>
                    <SmallButton $dim><CutIcon />Cut</SmallButton>
                    <SmallButton $dim><PathIcon />Copy path</SmallButton>
                    <SmallButton $dim><ShortcutIcon />Paste shortcut</SmallButton>
                </SmallColumn>
            </GroupBody>
            <GroupName>Clipboard</GroupName>
        </Group>
        <Group $w={165}>
            <GroupBody $pad={8}>
                <SmallColumn $tall $w={77}>
                    <SmallButton $dim $gap={2}><MoveIcon />Move to <Tri c="#b0b0b0" ml={2} /></SmallButton>
                    <SmallButton $dim $gap={2}><CopyToIcon />Copy to <Tri c="#b0b0b0" ml={2} /></SmallButton>
                </SmallColumn>
                <InnerSep />
                <SmallColumn $tall $l={6}>
                    <SmallButton $dim><DeleteIcon />Delete <Tri ml={1} /></SmallButton>
                    <SmallButton $dim><RenameIcon />Rename</SmallButton>
                </SmallColumn>
            </GroupBody>
            <GroupName>Organize</GroupName>
        </Group>
        <Group $w={83}>
            <GroupBody $pad={4}>
                <BigButton $w={40}><BigIcon><BigFolderIcon /></BigIcon>New<br />folder</BigButton>
                <SmallColumn $l={5}>
                    <SmallButton $gap={1}><NewItemIcon /><Tri /></SmallButton>
                    <SmallButton $gap={1}><EasyIcon /><Tri /></SmallButton>
                </SmallColumn>
            </GroupBody>
            <GroupName>New</GroupName>
        </Group>
        <Group $w={133}>
            <GroupBody $pad={5}>
                <BigButton $w={54}>
                    <BigIcon><CheckPage w={22} h={28} /></BigIcon>Properties
                    <Svg width="6" height="13" viewBox="0 0 6 13"><path d="M0 4h6L3 7z" fill="#111" /></Svg>
                </BigButton>
                <SmallColumn $l={5}>
                    <SmallButton $dim><OpenIcon />Open <Tri c="#b0b0b0" ml={1} /></SmallButton>
                    <SmallButton $dim><EditIcon />Edit</SmallButton>
                    <SmallButton><HistoryIcon />History</SmallButton>
                </SmallColumn>
            </GroupBody>
            <GroupName>Open</GroupName>
        </Group>
        <Group $w={115}>
            <GroupBody $pad={7}>
                <SmallColumn>
                    <SmallButton><SelectIcon on={[true, true, true, true]} />Select all</SmallButton>
                    <SmallButton><SelectIcon on={[false, false, false, false]} />Select none</SmallButton>
                    <SmallButton><SelectIcon on={[false, true, true, false]} />Invert selection</SmallButton>
                </SmallColumn>
            </GroupBody>
            <GroupName>Select</GroupName>
        </Group>
    </Ribbon>
);

const Explorer = () => (
    <Window>
        <TitleBar>
            <DocIcon />
            <TitleSep $l={7} $r={11} />
            <CheckPage w={13} h={16} />
            <Gap $w={7} />
            <FolderIcon w={18} h={16} />
            <Svg width="18" height="10" viewBox="0 0 18 10"><path d="M5 2.500h7" stroke="#111" /><path d="M5 5h7L8.500 8.500z" fill="#111" /></Svg>
            <TitleSep $l={2} $r={7} />
            <span>Documents</span>
            <WindowButtons>
                <Svg width="10" height="11" viewBox="0 0 10 11"><path d="M0 5.500h10" stroke="#111" /></Svg>
                <Svg width="11" height="11" viewBox="0 0 11 11"><rect x=".5" y=".5" width="9" height="9" fill="none" stroke="#111" /></Svg>
                <Svg width="11" height="11" viewBox="0 0 11 11"><path d="M.5.500l10 10M10.500.5l-10 10" stroke="#111" strokeWidth="1.100" /></Svg>
            </WindowButtons>
        </TitleBar>
        <RibbonTabs>
            <RibbonTab $w={56} $kind="file">File</RibbonTab>
            <RibbonTab $w={58} $kind="active">Home</RibbonTab>
            <RibbonTab $w={59}>Share</RibbonTab>
            <RibbonTab $w={54}>View</RibbonTab>
            <RibbonRight>
                <Chevron d="M.5 6.500l4-4 4 4" c="#999" t={1.3} />
                <Svg width="16" height="16" viewBox="0 0 16 16">
                    <circle cx="8" cy="8" r="7.600" fill="#0f62b4" stroke="#0b4a8c" strokeWidth=".6" />
                    <path d="M5.700 6.200C5.700 3.200 10.400 3.300 10.400 6c0 1.700-2.200 1.800-2.200 3.600" fill="none" stroke="#fff" strokeWidth="1.600" />
                    <circle cx="8.200" cy="12" r="1.100" fill="#fff" />
                </Svg>
            </RibbonRight>
        </RibbonTabs>
        <ExplorerRibbon />
        <AddressRow>
            <Chevron w={13} h={12} d="M6 1L1.500 6 6 11M1.500 6H12.500" c="#666" t={1.5} />
            <Chevron ml={17} w={13} h={12} d="M7 1l4.500 5L7 11M11.500 6H.5" c="#d5d5d5" t={1.5} />
            <Chevron ml={13} w={7} h={6} d="M.5 1l3 3 3-3" c="#777" t={1.4} />
            <Chevron ml={11} w={12} h={13} d="M1 6.500L6 1.500l5 5M6 1.500V13" c="#666" t={1.8} />
            <AddressBox>
                <Gap $w={2} />
                <DocIcon />
                <Chevron ml={6} w={6} h={7} d="M1.500.5l3 3-3 3" c="#666" t={1.4} />
                <Crumb $w={40}>This PC</Crumb>
                <Chevron ml={7} w={6} h={7} d="M1.500.5l3 3-3 3" c="#666" t={1.4} />
                <Crumb $w={62}>Documents</Crumb>
                <Chevron ml={7} w={6} h={7} d="M1.500.5l3 3-3 3" c="#666" t={1.4} />
                <Gap $w={245} />
                <Chevron w={10} h={7} d="M1 1.500l4 4 4-4" c="#777" t={1.8} />
                <Refresh>
                    <Svg width="11" height="12" viewBox="0 0 11 12">
                        <path d="M8.500 3A4.200 4.200 0 1 1 3 2.800" fill="none" stroke="#666" strokeWidth="1.600" />
                        <path d="M1 .5h5v4.500z" fill="#666" />
                    </Svg>
                </Refresh>
            </AddressBox>
            <SearchBox>
                <span>Search Documents</span>
                <Svg width="13" height="12" viewBox="0 0 13 12"><circle cx="8" cy="4.500" r="3.500" fill="none" stroke="#666" strokeWidth="1.500" /><path d="M5.500 7L1 11.500" stroke="#666" strokeWidth="1.800" /></Svg>
            </SearchBox>
        </AddressRow>
        <Panes>
            <NavPane>
                {navItems.map((n, i) => (
                    <NavRow key={i} $level={n.level} $selected={n.selected}>{n.icon}<NavLabel>{n.name}</NavLabel></NavRow>
                ))}
            </NavPane>
            <VScroll>
                <Chevron w={9} h={6} d="M1 5l3.500-3.500L8 5" />
                <VThumb />
                <Chevron w={9} h={6} d="M1 1l3.500 3.500L8 1" />
            </VScroll>
            <FilePane>
                <HeaderRow>
                    <HeaderCell $first>
                        Name
                        <SortMark width="9" height="5" viewBox="0 0 9 5"><path d="M.5 4.500l4-4 4 4" fill="none" stroke="#777" /></SortMark>
                    </HeaderCell>
                    <HeaderCell>Date modified</HeaderCell>
                    <HeaderCell>Type</HeaderCell>
                    <HeaderCell>Size</HeaderCell>
                </HeaderRow>
                {files.map(f => (
                    <FileRow key={f.name}>
                        <FileName>{f.icon}<span>{f.name}</span></FileName>
                        <FileCell>{f.date}</FileCell>
                        <FileCell>{f.type}</FileCell>
                        <FileCell $right>{f.size}</FileCell>
                    </FileRow>
                ))}
                <HScroll>
                    <Chevron w={6} h={9} d="M5 1L1.500 4.500 5 8" />
                    <HThumb />
                    <Chevron w={6} h={9} d="M1 1l3.500 3.500L1 8" />
                </HScroll>
            </FilePane>
        </Panes>
        <StatusBar>
            <span>8 items</span>
            <ViewToggle>
                <Svg width="16" height="13" viewBox="0 0 16 13">
                    <path d="M.5.5h4v12h-4zM.5 4.500h4M.5 8.500h4" fill="#fff" stroke="#777" />
                    <path d="M6 2.500h4M12 2.500h4M6 6.500h4M12 6.500h4M6 10.500h4M12 10.500h4" stroke="#555" />
                </Svg>
            </ViewToggle>
            <PictureIcon w={14} />
        </StatusBar>
    </Window>
);

const TaskbarView = () => (
    <Taskbar>
        <StartButton>
            <Svg width="16" height="16" viewBox="0 0 16 16" fill="#fff">
                <path d="M0 2.300l6.500-.9v6.200H0zM7.300 1.300L16 0v7.600H7.300zM0 8.400h6.500v6.200L0 13.700zM7.300 8.400H16V16l-8.700-1.300z" />
            </Svg>
        </StartButton>
        <TaskSearch>
            <Svg width="16" height="16" viewBox="0 0 16 16"><circle cx="10" cy="6" r="5.400" fill="none" stroke="#222" strokeWidth="1.300" /><path d="M6 10L.5 15.500" stroke="#222" strokeWidth="1.300" /></Svg>
            <SearchHint>Type here to search</SearchHint>
            <FlowerArt />
        </TaskSearch>
        <TaskButton>
            <Svg width="17" height="16" viewBox="0 0 17 16" fill="none" stroke="#fff" strokeWidth="1.200">
                <path d="M1 0v2.500h10V0M1 16v-2.500h10V16M1 5h10v6H1zM15 0v3M15 9v7" />
                <path d="M15 4.500v3" strokeWidth="3" />
            </Svg>
        </TaskButton>
        <Gap $w={7} />
        <TaskButton $w={40} $open><EdgeIcon /></TaskButton>
        <Gap $w={5} />
        <TaskButton $open $active><LibraryIcon w={22} h={22} /></TaskButton>
        <TaskButton $w={50}><FirefoxIcon /></TaskButton>
        <Tray>
            <Svg width="90" height="18" viewBox="0 0 90 18" fill="none" stroke="#fff" strokeWidth="1.100">
                <path d="M1 11.500L6.500 6l5.500 5.500" />
                <rect x="26" y="6" width="7" height="7" rx="1.500" />
                <path d="M33 8.500l2.500-1.500v5L33 10.500M26 3.500q4-3 8 0M26 15.500q4 3 8 0" />
                <path d="M52 3.500h10v8.500H50v-2.500M56 12v3M52 15.500h8" />
                <rect x="46.500" y="2.500" width="5" height="4" />
                <path d="M49 6.500V13" />
                <path d="M70.500 7v4.500h2.500l3 3V4l-3 3zM78.500 6.500q1.500 2.500 0 5.500M81 5q2.500 4 0 8.500M83.500 3.500q3.500 5.500 0 11.500" />
            </Svg>
            <Clock>5:00 PM<br />9/3/2025</Clock>
            <Svg $mr={19} width="18" height="18" viewBox="0 0 18 18" fill="none" stroke="#fff" strokeWidth="1.200">
                <path d="M1.500 2h15v11.500h-5l-2.500 3-2.500-3h-5z" />
            </Svg>
            <ShowDesktop />
        </Tray>
    </Taskbar>
);

function App() {
    return (
        <Desktop>
            <GlobalStyle />
            <BrowserView />
            <AnyRunMark />
            <Explorer />
            <TaskbarView />
        </Desktop>
    );
}

export default App;
